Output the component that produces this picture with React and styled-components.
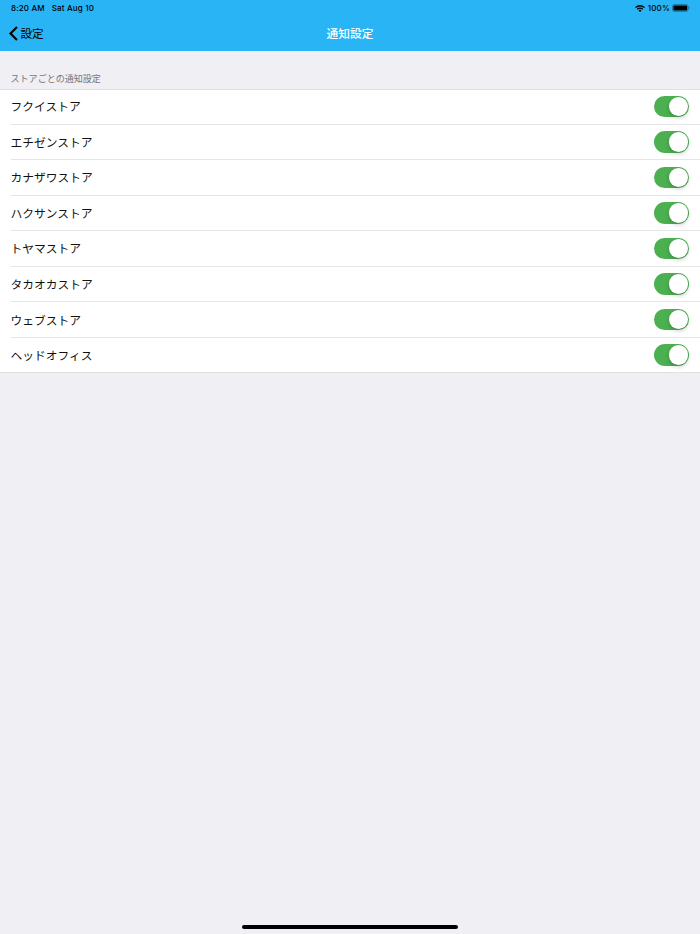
import React from "react";
import styled, { createGlobalStyle } from "styled-components";

const Global = createGlobalStyle`
  * { box-sizing: border-box; }
  body { margin: 0; background: #efeff4; font-family: "Inter", "Noto Sans CJK JP", sans-serif; color: #000; }
`;
const Screen = styled.main`
  width: 700px; height: 934px; display: flex; flex-direction: column; background: #efeff4; overflow: hidden;
`;
const Header = styled.header`
  height: 51px; background: #29b4f6; flex: none;
`;
const StatusBar = styled.div`
  height: 17px; padding: 0 10px 0 11px; display: flex; align-items: center; justify-content: space-between;
  font-size: 8px; font-weight: 500; line-height: 17px; letter-spacing: .16px; white-space: nowrap;
`;
const StatusGroup = styled.div`
  display: flex; align-items: center; gap: ${(p) => p.$gap}px;
`;
const Battery = styled.svg`
  margin: 0 0 1px -1px;
`;
const NavBar = styled.nav`
  height: 33px; padding-left: 9px; display: grid; grid-template-columns: 1fr auto 1fr; align-items: center;
`;
const Back = styled.button`
  display: flex; align-items: center; gap: 3px; padding: 0; border: 0; background: none; color: #000;
  font: 400 11.6px/33px "Noto Sans CJK JP", sans-serif;
  svg { margin-left: -.5px; }
`;
const Title = styled.h1`
  margin: 0 9px 0 0; padding-bottom: 1px; color: #fff; font: 500 11.7px/32px "Noto Sans CJK JP", sans-serif;
`;
const SectionLabel = styled.h2`
  margin: 0; height: 38px; padding: 20px 10.5px 0; color: #76767b;
  font: 400 9.050px/16px "Noto Sans CJK JP", sans-serif;
`;
const List = styled.ul`
  margin: 0; padding: 0; list-style: none; background: #fff; box-shadow: inset 0 1px #e0e0e3, inset 0 -1px #e0e0e3;
`;
const Row = styled.li`
  height: 35.55px; margin-left: 10.5px; padding: 0 10.8px 1px 0; display: flex; align-items: center; justify-content: space-between;
  font: 400 11.75px/34px "Noto Sans CJK JP", sans-serif; color: #111;
  box-shadow: inset 0 -1px #e5e5e8;
  &:last-child { box-shadow: none; }
`;
const Toggle = styled.button`
  width: 35px; height: 21.5px; padding: 1px; border: 0; border-radius: 11px; background: #4caf50;
  display: flex; justify-content: flex-end;
`;
const Knob = styled.span`
  width: 19.5px; height: 19.5px; border-radius: 50%; background: #fff; box-shadow: 0 2px 4px rgba(0,0,0,.2);
`;
const HomeArea = styled.footer`
  margin-top: auto; height: 9.500px; display: flex; justify-content: center;
`;
const HomeBar = styled.div`
  width: 215.6px; height: 4px; border-radius: 2px; background: #000;
`;

const stores = ["フクイストア", "エチゼンストア", "カナザワストア", "ハクサンストア", "トヤマストア", "タカオカストア", "ウェブストア", "ヘッドオフィス"];

export default function App() {
  return (
    <Screen>
      <Global />
      <Header>
        <StatusBar>
          <StatusGroup $gap={7}><span>8:20 AM</span><span>Sat Aug 10</span></StatusGroup>
          <StatusGroup $gap={3}>
            <svg width="10" height="7" viewBox="0 0 10 7" fill="none" stroke="#000" strokeWidth="1.35">
              <path d="M.5 2.500Q5-1 9.500 2.500M2.200 4.200Q5 2 7.800 4.200" />
              <path d="M3.500 5.400Q5 4.300 6.500 5.400L5 6.900Z" fill="#000" stroke="none" />
            </svg>
            <span>100%</span>
            <Battery width="18" height="8" viewBox="0 0 18 8">
              <rect x=".5" y=".5" width="15.600" height="7" rx="2" fill="none" stroke="#000" strokeOpacity=".4" strokeWidth=".8" />
              <rect x="1.400" y="1.400" width="13.800" height="5.200" rx="1.100" />
              <path d="M16.800 2.800q1.300 1.200 0 2.400z" fillOpacity=".5" />
            </Battery>
          </StatusGroup>
        </StatusBar>
        <NavBar>
          <Back>
            <svg width="9" height="15" viewBox="0 0 9 15" fill="none" stroke="#000" strokeWidth="2.200"><path d="M8 1L1.500 7.500L8 14" /></svg>
            <span>設定</span>
          </Back>
          <Title>通知設定</Title>
        </NavBar>
      </Header>
      <SectionLabel>ストアごとの通知設定</SectionLabel>
      <List>
        {stores.map((name) => (
          <Row key={name}>
            <span>{name}</span>
            <Toggle role="switch" aria-checked="true" aria-label={name}><Knob /></Toggle>
          </Row>
        ))}
      </List>
      <HomeArea><HomeBar /></HomeArea>
    </Screen>
  );
}
